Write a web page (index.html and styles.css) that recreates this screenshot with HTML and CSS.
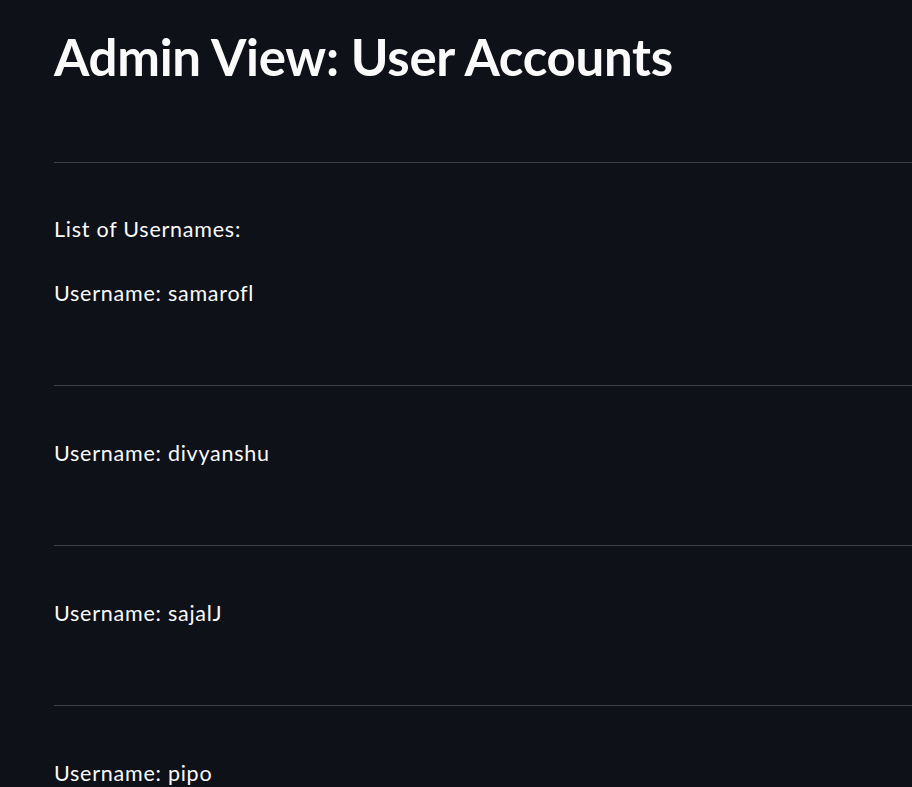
FILE: index.html
```html
<!DOCTYPE html>
<html lang="en">
<head>
<meta charset="utf-8">
<title>Admin View: User Accounts</title>
<link rel="stylesheet" href="styles.css">
</head>
<body>
<main class="page">
  <h1 class="title">Admin View: User Accounts</h1>
  <hr class="rule first">
  <p class="text intro">List of Usernames:</p>
  <p class="text">Username: samarofl</p>
  <hr class="rule">
  <p class="text">Username: divyanshu</p>
  <hr class="rule">
  <p class="text">Username: sajalJ</p>
  <hr class="rule">
  <p class="text">Username: pipo</p>
</main>
</body>
</html>
```
FILE: styles.css
```css
html, body {
  margin: 0;
  padding: 0;
  background: #0e1117;
  overflow: hidden;
}
body {
  width: 912px;
  height: 787px;
  font-family: "Lato", "Liberation Sans", sans-serif;
  color: #fafafa;
}
.page {
  padding: 24px 0 0 54px;
  display: flex;
  flex-direction: column;
}
.title {
  margin: 0;
  font-size: 51px;
  line-height: 66px;
  font-weight: 700;
  letter-spacing: -0.3px;
}
.rule {
  margin: 76px 0 51px 0;
  border: none;
  height: 1px;
  background: #3d3f44;
  width: calc(100% + 20px);
}
.rule.first {
  margin-top: 72px;
  margin-bottom: 50px;
}
.text {
  margin: 0;
  font-size: 21.5px;
  line-height: 32px;
  letter-spacing: 0.75px;
}
.intro {
  margin-bottom: 32px;
}
```
